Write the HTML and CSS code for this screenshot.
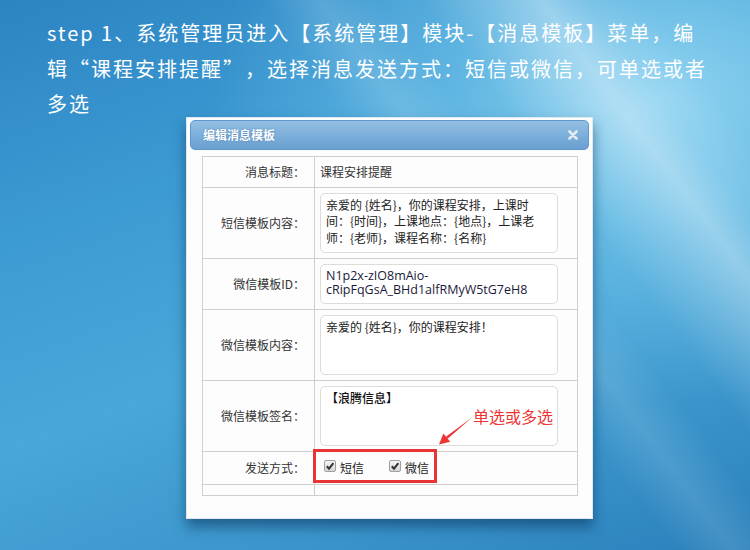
FILE: index.html
```html
<!DOCTYPE html>
<html lang="zh-CN">
<head>
    <meta charset="UTF-8">
    <title>编辑消息模板</title>
    <link rel="stylesheet" href="styles.css">
</head>
<body>

    <p class="intro">step 1、系统管理员进入【系统管理】模块-【消息模板】菜单，编辑“课程安排提醒”，选择消息发送方式：短信或微信，可单选或者多选</p>

    <div class="dialog">
        <div class="dialog-title">
            <span>编辑消息模板</span>
            <svg class="close" width="10" height="10" viewBox="0 0 10 10">
                <path d="M1.5 1.5 L8.5 8.5 M8.5 1.5 L1.5 8.5" stroke="#e4ebf2" stroke-width="2.6" stroke-linecap="round"/>
            </svg>
        </div>

        <table class="form">
            <tr>
                <td class="label">消息标题：</td>
                <td>课程安排提醒</td>
            </tr>
            <tr>
                <td class="label">短信模板内容：</td>
                <td><textarea class="box">亲爱的 {姓名}，你的课程安排，上课时间：{时间}，上课地点：{地点}，上课老师：{老师}，课程名称：{名称}</textarea></td>
            </tr>
            <tr>
                <td class="label">微信模板ID：</td>
                <td><textarea class="box box-id">N1p2x-zIO8mAio-cRipFqGsA_BHd1alfRMyW5tG7eH8</textarea></td>
            </tr>
            <tr>
                <td class="label">微信模板内容：</td>
                <td><textarea class="box">亲爱的 {姓名}，你的课程安排！</textarea></td>
            </tr>
            <tr>
                <td class="label">微信模板签名：</td>
                <td><textarea class="box box-sign">【浪腾信息】</textarea></td>
            </tr>
            <tr>
                <td class="label">发送方式：</td>
                <td>
                    <div class="send">
                        <label class="check"><span class="tick"><svg width="10" height="10" viewBox="0 0 10 10"><path d="M1.8 5.2 L4 7.6 L8.4 2.2" fill="none" stroke="#333" stroke-width="2"/></svg></span>短信</label>
                        <label class="check"><span class="tick"><svg width="10" height="10" viewBox="0 0 10 10"><path d="M1.8 5.2 L4 7.6 L8.4 2.2" fill="none" stroke="#333" stroke-width="2"/></svg></span>微信</label>
                    </div>
                </td>
            </tr>
            <tr class="empty">
                <td class="label"></td>
                <td></td>
            </tr>
        </table>

        <!-- 标注 -->
        <div class="mark"></div>
        <div class="note">单选或多选</div>
        <svg class="arrow" width="40" height="34" viewBox="0 0 40 34">
            <polygon points="36,3.5 11.6,24.8 9.9,22.7" fill="#ee3333"/>
            <polygon points="3,30.5 14.2,27.8 7.4,19.6" fill="#ee3333"/>
        </svg>
    </div>

</body>
</html>
```

FILE: styles.css
```css
body {
    margin: 0;
    width: 750px;
    height: 550px;
    overflow: hidden;
    font-family: "Noto Sans CJK SC", sans-serif;
    text-spacing-trim: space-all;
    background:
        linear-gradient(53deg, rgba(255,255,255,0) 72%, rgba(255,255,255,.16) 77%, rgba(255,255,255,.34) 82%, rgba(255,255,255,.12) 86%, rgba(255,255,255,0) 91%),
        linear-gradient(53deg, rgba(255,255,255,0) 58%, rgba(255,255,255,.12) 63%, rgba(255,255,255,0) 68%),
        radial-gradient(ellipse 60% 55% at 88% 18%, #8fd3f1 0%, rgba(120,200,236,.6) 45%, rgba(94,184,228,0) 100%),
        linear-gradient(160deg, #2c84c2 0%, #3d9bd3 30%, #4aa7d9 55%, #3a95cb 80%, #2a80bb 100%);
}

.intro {
    margin: 0;
    padding: 15px 0 0 47px;
    width: 664px;
    color: #fff;
    font-size: 20px;
    letter-spacing: 2px;
    line-height: 35.5px;
}

.dialog {
    position: relative;
    margin: -5px 0 0 186px;
    width: 407px;
    height: 402px;
    box-sizing: border-box;
    padding: 2px 3px;
    background-color: #fdfdfd;
    border: 1px solid #dde8f1;
    box-shadow: 0 8px 12px rgba(10,50,90,.55);
}

.dialog-title {
    display: flex;
    justify-content: space-between;
    align-items: center;
    height: 30px;
    box-sizing: border-box;
    padding: 0 10px 0 12px;
    border: 1px solid #5f98cc;
    border-radius: 5px;
    background: linear-gradient(#95bfe2, #7aaeda 55%, #6a9fd0);
    color: #fff;
    font-size: 12px;
    font-weight: bold;
    text-shadow: 0 0 2px rgba(40,90,140,.6);
}

.form {
    width: 376px;
    margin: 6px 0 0 12px;
    border-collapse: collapse;
    font-size: 12px;
    color: #333;
}

.form td {
    border: 1px solid #cfcfcf;
    padding: 5px;
    line-height: 20px;
}

.form td.label {
    width: 97px;
    text-align: right;
    padding-right: 9px;
}

.form .empty td {
    padding: 5px;
    height: 0;
    line-height: 0;
}

.box {
    display: block;
    width: 238px;
    height: 60px;
    box-sizing: border-box;
    padding: 3px 22px 3px 5px;
    border: 1px solid #dcdcdc;
    border-radius: 5px;
    resize: none;
    overflow: hidden;
    font-family: "Noto Sans CJK SC", sans-serif;
    font-size: 12px;
    line-height: 16.6px;
    text-spacing-trim: space-all;
    color: #222;
    background: #fff;
}

.box-id {
    height: 40px;
    padding-top: 4px;
    font-family: "Open Sans", sans-serif;
    font-size: 12.5px;
    line-height: 14px;
    color: #1a1a3a;
}

.box-sign {
    color: #111;
    font-weight: 500;
}

.send {
    display: flex;
    gap: 25px;
    padding-left: 4px;
    height: 22px;
    align-items: center;
}

.check {
    display: flex;
    align-items: center;
    gap: 4px;
    color: #222;
    font-size: 12px;
}

.tick {
    display: inline-flex;
    justify-content: center;
    align-items: center;
    width: 12px;
    height: 12px;
    box-sizing: border-box;
    margin-top: -4px;
    border: 1px solid #a0a0a0;
    border-radius: 2px;
    background: linear-gradient(#f5f5f5, #d6d6d6);
}

.mark {
    position: absolute;
    left: 126px;
    top: 331px;
    width: 124px;
    height: 34px;
    box-sizing: border-box;
    border: 3px solid #e83434;
}

.note {
    position: absolute;
    left: 286px;
    top: 288px;
    color: #ee3333;
    font-size: 16px;
    line-height: 20px;
}

.arrow {
    position: absolute;
    left: 249px;
    top: 296px;
}
```
